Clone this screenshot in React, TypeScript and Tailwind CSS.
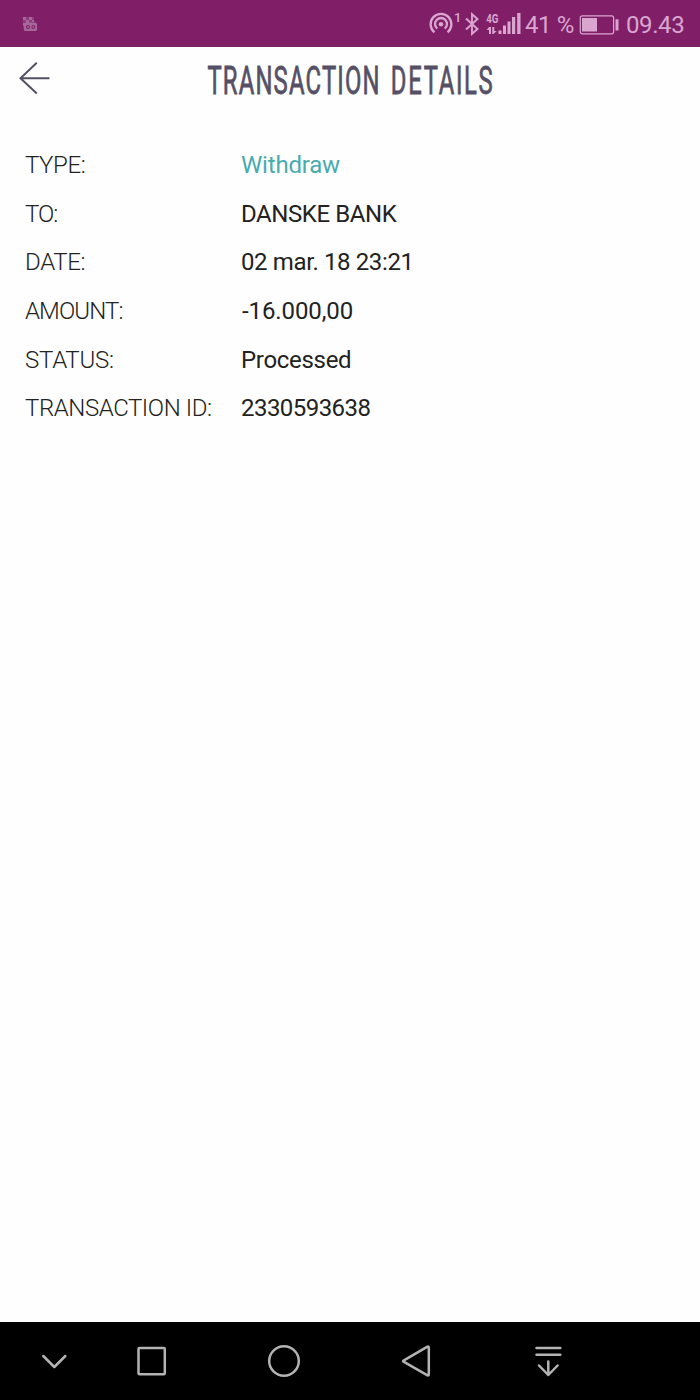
interface DetailRowProps {
  label: string
  value: string
  labelClass: string
  valueClass: string
}

const details: DetailRowProps[] = [
  { label: 'TYPE:', value: 'Withdraw', labelClass: 'tracking-[-0.4px]', valueClass: 'tracking-[-0.2px] text-[#4aabae]' },
  { label: 'TO:', value: 'DANSKE BANK', labelClass: 'tracking-[-1px]', valueClass: 'tracking-[-0.42px]' },
  { label: 'DATE:', value: '02 mar. 18 23:21', labelClass: 'tracking-[-0.35px]', valueClass: 'tracking-[-0.38px]' },
  { label: 'AMOUNT:', value: '-16.000,00', labelClass: 'tracking-[-0.9px]', valueClass: 'pl-px tracking-[-0.1px]' },
  { label: 'STATUS:', value: 'Processed', labelClass: 'tracking-[-0.25px]', valueClass: 'tracking-[-0.3px]' },
  { label: 'TRANSACTION ID:', value: '2330593638', labelClass: 'tracking-[-0.43px]', valueClass: 'tracking-[-0.55px]' },
]

function DetailRow({ label, value, labelClass, valueClass }: DetailRowProps) {
  return (
    <div className="flex h-[48.6px] items-center whitespace-nowrap text-[24px] text-[#222222]">
      <dt className={`w-[216px] shrink-0 font-light ${labelClass}`}>{label}</dt>
      <dd className={valueClass}>{value}</dd>
    </div>
  )
}

function NotificationIcon() {
  return (
    <svg width="16" height="16" viewBox="0 0 16 16" fill="#a6679a">
      <path d="M1 1h3v3h-3zM7 1h3v3h-3zM4 4h3v3h-3zM10 4h2v2h-2zM1 7h2v3h-2z" />
      <path d="M4 1h3v3h-3zM10 1h2v3h-2zM1 4h3v3h-3zM7 4h3v3h-3z" opacity="0.4" />
      <path d="M3 6.500h10.500l1.500 1.500v6l-1 1h-11.500l-1-3.500z" />
      <circle cx="6" cy="11" r="2" fill="#801f68" />
      <circle cx="11.300" cy="11" r="2" fill="#801f68" />
      <circle cx="6" cy="11" r="0.900" />
      <circle cx="11.300" cy="11" r="0.900" />
    </svg>
  )
}

function HotspotIcon() {
  return (
    <svg width="24" height="24" viewBox="0 0 24 24" fill="none" stroke="currentColor" strokeWidth="2.300">
      <path d="M5.400 20.300A10.400 10.400 0 1 1 18.600 20.300" />
      <path d="M8.300 16.700A6 6 0 1 1 15.700 16.700" />
      <circle cx="12" cy="12.300" r="2.300" fill="currentColor" stroke="none" />
    </svg>
  )
}

function BluetoothIcon() {
  return (
    <svg width="14" height="24" viewBox="0 0 14 24" fill="none" stroke="currentColor" strokeWidth="1.900">
      <path d="M1 6.500L12.500 17L7 21.800V2.200L12.500 7L1 17.500" />
    </svg>
  )
}

function SignalIcon() {
  return (
    <svg width="38" height="30" viewBox="-2 -6 38 30" fill="currentColor" className="tracking-normal">
      <text x="0.300" y="10.500" fontSize="13.500" fontWeight="700" textLength="12.200" lengthAdjust="spacingAndGlyphs">
        4G
      </text>
      <path d="M3 15h2v7h-2v-4h-2.400zM6.300 15h2v4h2.400l-3.200 3h-1.200z" />
      <path d="M12.500 18.500h3v3.500h-3zM17 13.500h3v8.500h-3zM21.500 9.500h3v12.500h-3zM26 5h3.200v17h-3.200zM31.200 1h3.300v21h-3.300z" />
    </svg>
  )
}

function BatteryIcon() {
  return (
    <svg width="41" height="20" viewBox="0 0 41 20" fill="currentColor">
      <rect x="1.300" y="0.800" width="33.300" height="18" rx="2" fill="none" stroke="currentColor" strokeWidth="1.200" />
      <rect x="3" y="3" width="15" height="13.500" />
      <rect x="36.500" y="4.300" width="3" height="11.200" />
    </svg>
  )
}

function StatusBar() {
  return (
    <div className="flex h-[46.5px] shrink-0 items-start bg-[#801f68] text-[#d9a6cf]">
      <div className="ml-[22px] mt-4">
        <NotificationIcon />
      </div>
      <div className="ml-auto flex w-[271px] items-start whitespace-nowrap text-[24px] leading-[26px] tracking-[-0.4px]">
        <div className="mt-3 shrink-0">
          <HotspotIcon />
        </div>
        <span className="mt-3 w-3 shrink-0 pl-px text-[13px] font-medium leading-3">1</span>
        <div className="mt-[11.5px] shrink-0">
          <BluetoothIcon />
        </div>
        <div className="ml-[5px] mt-1.5 shrink-0">
          <SignalIcon />
        </div>
        <span className="ml-[3px] mt-3 w-[54px] shrink-0">41 %</span>
        <div className="mt-[14.5px] shrink-0">
          <BatteryIcon />
        </div>
        <span className="ml-[6px] mt-3">09.43</span>
      </div>
    </div>
  )
}

function Header() {
  return (
    <header className="flex h-[94.4px] shrink-0 items-start text-[#565066]">
      <button className="ml-[19px] mt-[14px] w-8" aria-label="Back">
        <svg width="32" height="34" viewBox="0 0 32 34" fill="none" stroke="currentColor" strokeWidth="2">
          <path d="M17.800 1.800L1.500 17.200L17.800 32.500M1.500 17.200H30.500" />
        </svg>
      </button>
      <h1 className="mr-[50px] mt-[11px] flex flex-1 justify-center whitespace-nowrap text-[38px] font-normal leading-[46px]">
        <span className="-mx-24 inline-block scale-x-[0.627] tracking-[2.7px] [-webkit-text-stroke:0.8px_currentColor] [word-spacing:4px]">
          <span className="tracking-[1.9px]">TRANSACTION</span> DETAILS
        </span>
      </h1>
    </header>
  )
}

function NavBar() {
  return (
    <nav className="flex h-[78px] shrink-0 items-center bg-black text-[#b3b3b3]">
      <svg width="580" height="78" viewBox="0 0 580 78" fill="none" stroke="currentColor" strokeWidth="2.500" strokeLinecap="round" strokeLinejoin="round">
        <path d="M43.300 34L54.300 45L65.300 34" />
        <rect x="138.500" y="26" width="26.300" height="26.300" rx="1" />
        <circle cx="284" cy="39" r="14.800" />
        <path d="M403.500 38.600L427.500 24.700Q428.800 24.300 428.800 25.700V52.300Q428.800 53.800 427.500 53.400L403.500 39.600Q402.500 39 403.500 38.600Z" />
        <path d="M536.500 26H560.300M536.500 32.700H560.300M548.300 39.500V53M539 43.500L548.300 53L557.600 43.500" />
      </svg>
    </nav>
  )
}

export default function App() {
  return (
    <div className="flex h-[1400px] w-[700px] flex-col overflow-hidden bg-[#fefefe] font-['Roboto',sans-serif]">
      <StatusBar />
      <Header />
      <main className="flex-1 pl-[25px]">
        <dl>
          {details.map((row) => (
            <DetailRow key={row.label} {...row} />
          ))}
        </dl>
      </main>
      <NavBar />
    </div>
  )
}
